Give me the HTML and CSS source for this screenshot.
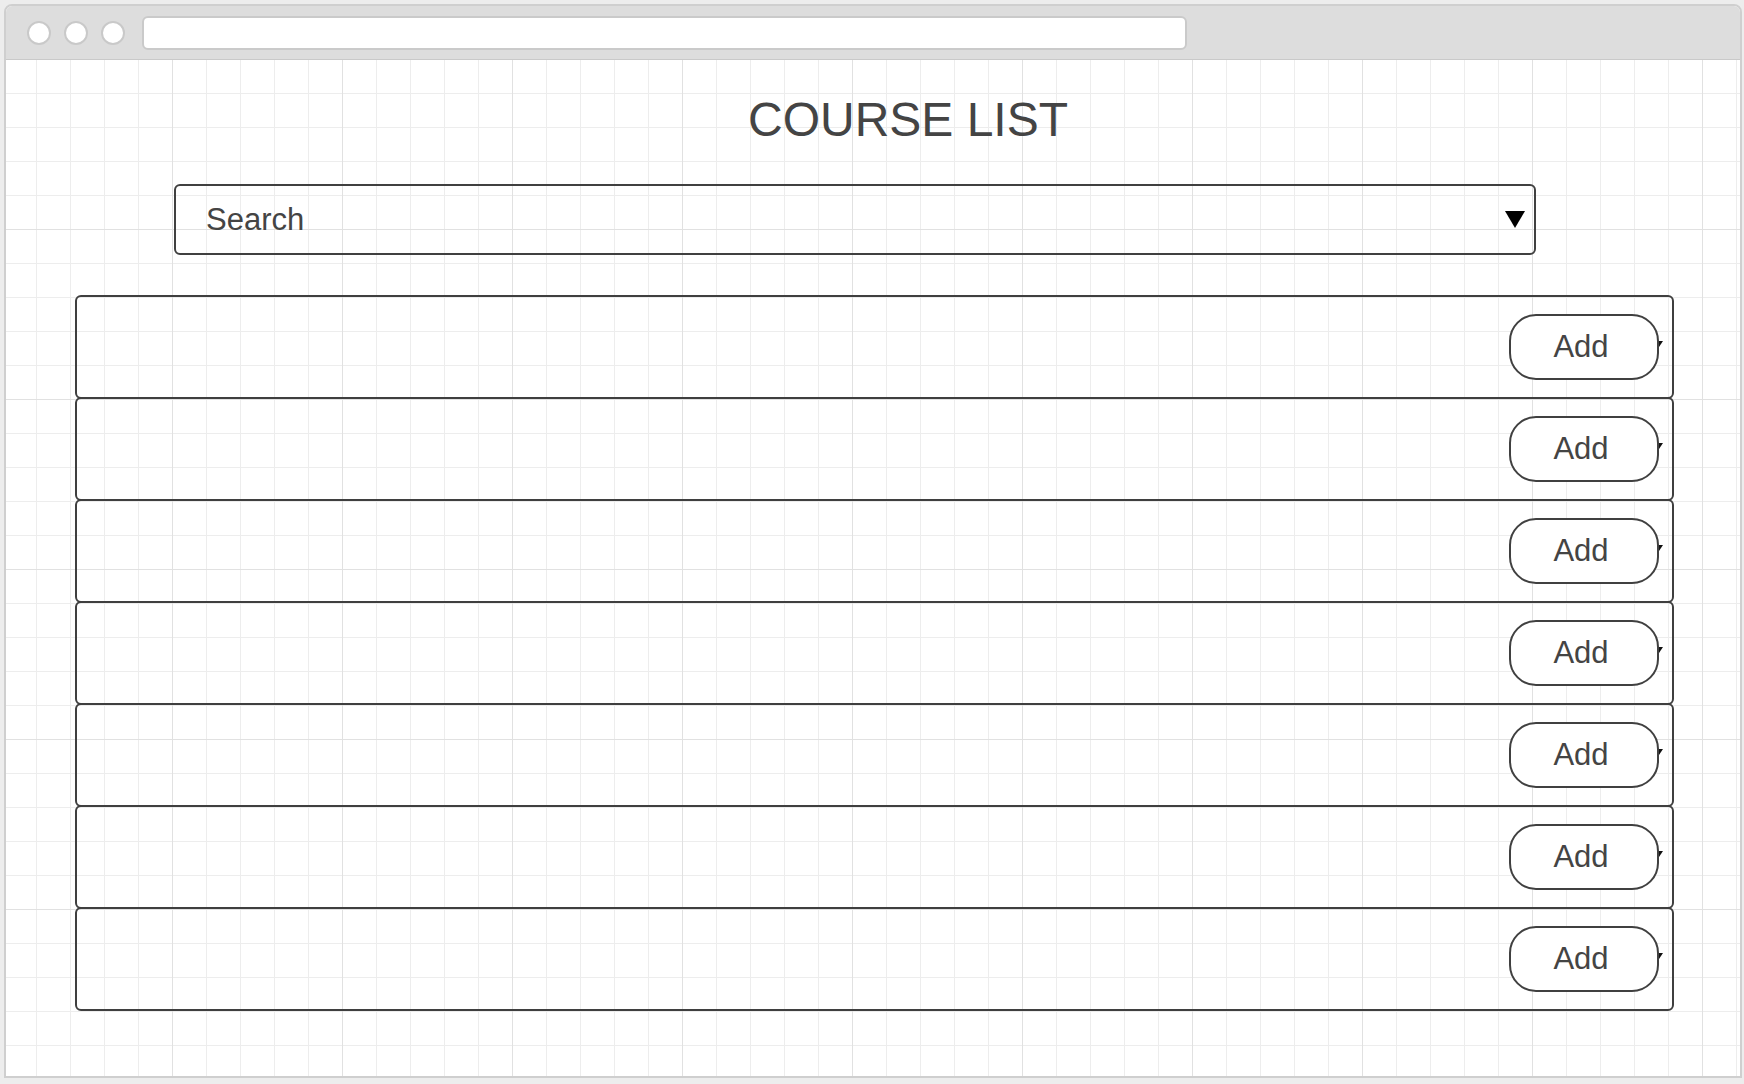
FILE: index.html
```html
<!DOCTYPE html>
<html lang="en">
<head>
<meta charset="utf-8">
<title>Course List</title>
<link rel="stylesheet" href="styles.css">
</head>
<body>
<div class="window">
  <div class="titlebar">
    <span class="dot"></span>
    <span class="dot"></span>
    <span class="dot"></span>
    <div class="address"></div>
  </div>
  <div class="canvas">
    <h1 class="title">COURSE LIST</h1>
    <div class="search">
      <span class="search-label">Search</span>
      <span class="arrow"></span>
    </div>
    <div class="list">
      <div class="row"><span class="caret"></span><button class="add">Add</button></div>
      <div class="row"><span class="caret"></span><button class="add">Add</button></div>
      <div class="row"><span class="caret"></span><button class="add">Add</button></div>
      <div class="row"><span class="caret"></span><button class="add">Add</button></div>
      <div class="row"><span class="caret"></span><button class="add">Add</button></div>
      <div class="row"><span class="caret"></span><button class="add">Add</button></div>
      <div class="row"><span class="caret"></span><button class="add">Add</button></div>
    </div>
  </div>
</div>
</body>
</html>
```
FILE: styles.css
```css
* { box-sizing: border-box; }
html, body { margin: 0; padding: 0; }
body {
  width: 1744px;
  height: 1084px;
  overflow: hidden;
  background: #ededed;
  font-family: "Liberation Sans", Arial, sans-serif;
}
.window {
  margin: 4px 0 0 4px;
  width: 1738px;
  height: 1074px;
  border: 2px solid #cfcfcf;
  border-radius: 8px 8px 0 0;
  background: #fff;
  display: flex;
  flex-direction: column;
  overflow: hidden;
}
.titlebar {
  flex: none;
  height: 54px;
  background: #dddddd;
  border-bottom: 1px solid #c9c9c9;
  display: flex;
  align-items: flex-start;
  padding: 10px 0 0 21px;
}
.dot {
  width: 24px;
  height: 24px;
  margin-top: 5px;
  margin-right: 13px;
  border-radius: 50%;
  background: #fff;
  border: 2px solid #c9c9c9;
}
.address {
  margin-left: 4px;
  width: 1045px;
  height: 34px;
  background: #fff;
  border: 2px solid #cacaca;
  border-radius: 6px;
}
.canvas {
  flex: 1;
  padding-top: 36px;
  background-color: #fff;
  background-image:
    linear-gradient(to right, #e1e1e1 1px, transparent 1px),
    linear-gradient(to bottom, #e1e1e1 1px, transparent 1px),
    linear-gradient(to right, #ededed 1px, transparent 1px),
    linear-gradient(to bottom, #ededed 1px, transparent 1px);
  background-size: 170px 170px, 170px 170px, 34px 34px, 34px 34px;
  background-position: -4px -1px;
}
.title {
  margin: 0;
  padding-left: 70px;
  font-weight: normal;
  font-size: 48px;
  line-height: 48px;
  color: #444;
  text-align: center;
}
.search {
  margin: 40px 0 0 168px;
  width: 1362px;
  height: 71px;
  border: 2px solid #404040;
  border-radius: 6px;
  display: flex;
  align-items: center;
  justify-content: space-between;
  padding: 0 9px 0 30px;
  font-size: 31px;
  color: #444;
}
.arrow {
  width: 0;
  height: 0;
  border-left: 10px solid transparent;
  border-right: 10px solid transparent;
  border-top: 17px solid #000;
}
.list {
  margin: 40px 0 0 69px;
  width: 1599px;
}
.row {
  position: relative;
  height: 104px;
  border: 2px solid #3f3f3f;
  border-radius: 6px;
  display: flex;
  align-items: center;
  justify-content: flex-end;
  padding-right: 13px;
}
.row + .row { margin-top: -2px; }
.caret {
  position: absolute;
  right: 9px;
  top: 44px;
  width: 0;
  height: 0;
  border-left: 4px solid transparent;
  border-right: 4px solid transparent;
  border-top: 6px solid #111;
}
.add {
  position: relative;
  z-index: 1;
  width: 150px;
  height: 66px;
  margin: 0;
  padding: 0 6px 0 0;
  border: 2px solid #404040;
  border-radius: 27px;
  background: #fff;
  font-family: "Liberation Sans", Arial, sans-serif;
  font-size: 31px;
  color: #444;
}
```
